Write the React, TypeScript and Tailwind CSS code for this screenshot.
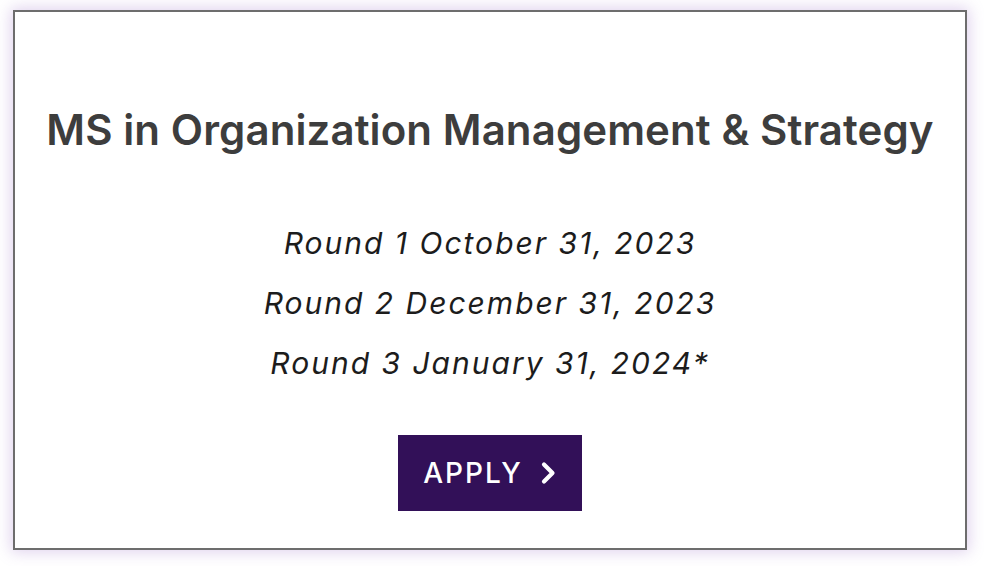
import React from "react";

export default function App() {
  return (
    <div className="w-[984px] h-[566px] bg-white pt-[10px] pl-[13px]" style={{ fontFamily: 'Inter, "Open Sans", "Liberation Sans", sans-serif' }}>
      <div className="w-[954px] h-[540px] border-2 border-[#6d6d6d] bg-white shadow-[0_0_14px_2px_rgba(140,90,190,0.28)] flex flex-col items-center pt-[96px]">
        <h1 className="text-[42px] leading-[44px] font-semibold text-[#3d3d3d] tracking-[0.1px]">
          MS in Organization Management &amp; Strategy
        </h1>
        <div className="mt-[61px] flex flex-col items-center italic text-[30px] leading-[60px] text-[#1c1c1c] tracking-[2px]">
          <p>Round 1 October 31, 2023</p>
          <p>Round 2 December 31, 2023</p>
          <p>Round 3 January 31, 2024*</p>
        </div>
        <button className="mt-[42px] w-[184px] h-[76px] bg-[#321058] text-white flex items-center justify-center text-[28px] font-medium">
          <span className="tracking-[2px]">APPLY</span>
          <svg className="ml-[16px]" width="18" height="24" viewBox="0 0 18 24" fill="none">
            <path d="M5 3.5 L13.5 12 L5 20.5" stroke="white" strokeWidth="4.2" strokeLinecap="round" strokeLinejoin="round" />
          </svg>
        </button>
      </div>
    </div>
  );
}
